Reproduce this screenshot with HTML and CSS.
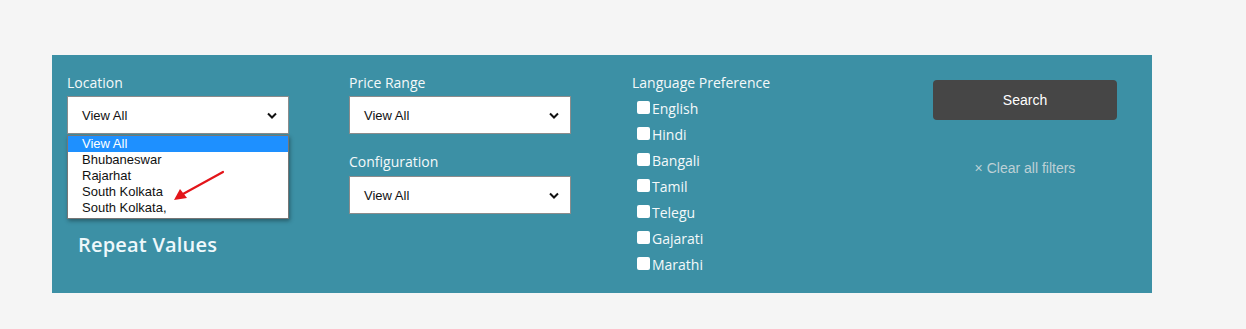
FILE: index.html
```html
<!DOCTYPE html>
<html lang="en">
<head>
    <meta charset="UTF-8">
    <title>Property Filters</title>
    <link rel="stylesheet" href="styles.css">
</head>
<body>

<div class="filters">
    <div class="col">
        <div class="label">Location</div>
        <div class="select-wrap">
            <div class="select">
                <span>View All</span>
                <svg class="chev" width="10" height="7" viewBox="0 0 10 7"><path d="M1 1.5 L5 5.5 L9 1.5" fill="none" stroke="#111" stroke-width="2"/></svg>
            </div>
            <!-- open dropdown -->
            <div class="options">
                <div class="option active">View All</div>
                <div class="option">Bhubaneswar</div>
                <div class="option">Rajarhat</div>
                <div class="option">South Kolkata</div>
                <div class="option">South Kolkata,</div>
                <svg class="arrow" width="60" height="36" viewBox="0 0 60 36">
                    <path d="M55 3 L15 25" stroke="#e3151a" stroke-width="2.2" fill="none" stroke-linecap="round"/>
                    <path d="M6 31 L12 20 L19 29 Z" fill="#e3151a"/>
                </svg>
            </div>
        </div>
        <div class="note">Repeat Values</div>
    </div>

    <div class="col">
        <div class="label">Price Range</div>
        <div class="select">
            <span>View All</span>
            <svg class="chev" width="10" height="7" viewBox="0 0 10 7"><path d="M1 1.5 L5 5.5 L9 1.5" fill="none" stroke="#111" stroke-width="2"/></svg>
        </div>
        <div class="label spaced">Configuration</div>
        <div class="select">
            <span>View All</span>
            <svg class="chev" width="10" height="7" viewBox="0 0 10 7"><path d="M1 1.5 L5 5.5 L9 1.5" fill="none" stroke="#111" stroke-width="2"/></svg>
        </div>
    </div>

    <div class="col">
        <div class="label">Language Preference</div>
        <div class="checks">
            <div class="check"><span class="box"></span>English</div>
            <div class="check"><span class="box"></span>Hindi</div>
            <div class="check"><span class="box"></span>Bangali</div>
            <div class="check"><span class="box"></span>Tamil</div>
            <div class="check"><span class="box"></span>Telegu</div>
            <div class="check"><span class="box"></span>Gajarati</div>
            <div class="check"><span class="box"></span>Marathi</div>
        </div>
    </div>

    <div class="col actions">
        <button class="search">Search</button>
        <div class="clear">&times; Clear all filters</div>
    </div>
</div>

</body>
</html>
```

FILE: styles.css
```css
body {
    margin: 0;
    padding: 55px 0 0 52px;
    background-color: #f5f5f5;
    font-family: "Open Sans", Arial, sans-serif;
}
.filters {
    width: 1100px;
    height: 238px;
    box-sizing: border-box;
    background-color: #3c90a5;
    padding: 18px 0 0 15px;
    display: grid;
    grid-template-columns: 282px 283px 281px 1fr;
}
.label {
    color: #f4f9fa;
    font-size: 14px;
    line-height: 20px;
    margin-bottom: 3px;
}
.label.spaced {
    margin-top: 18px;
    margin-bottom: 4px;
}
.select-wrap {
    position: relative;
}
.select {
    width: 222px;
    height: 38px;
    box-sizing: border-box;
    background: #fff;
    border: 1px solid #8c8c8c;
    display: flex;
    align-items: center;
    justify-content: space-between;
    padding: 0 11px 0 14px;
    font-family: "Liberation Sans", Arial, sans-serif;
    font-size: 13px;
    color: #111;
}
.options {
    position: absolute;
    top: 39px;
    left: 0;
    width: 222px;
    box-sizing: border-box;
    background: #fff;
    border: 1px solid #767676;
    padding-bottom: 2px;
    box-shadow: 1px 2px 4px rgba(0, 0, 0, 0.35);
    font-family: "Liberation Sans", Arial, sans-serif;
    font-size: 13px;
    color: #111;
    z-index: 2;
}
.option {
    height: 16px;
    line-height: 16px;
    padding-left: 14px;
}
.option.active {
    background: #1e90ff;
    color: #fff;
}
.arrow {
    position: absolute;
    left: 100px;
    top: 33px;
}
.note {
    margin-top: 97px;
    padding-left: 11px;
    color: #eef8fb;
    font-size: 20px;
    font-weight: 600;
    letter-spacing: 0.2px;
    line-height: 28px;
}
.checks {
    padding-left: 5px;
    margin-top: -1px;
}
.check {
    display: flex;
    align-items: center;
    height: 26px;
    color: #f4f9fa;
    font-size: 14px;
}
.box {
    width: 13px;
    height: 13px;
    background: #fff;
    border-radius: 2px;
    margin-right: 2px;
    margin-top: -2px;
}
.actions {
    padding-left: 20px;
    padding-top: 7px;
}
.search {
    width: 184px;
    height: 40px;
    background-color: #464646;
    color: #fff;
    border: none;
    border-radius: 4px;
    font-family: "Liberation Sans", Arial, sans-serif;
    font-size: 14px;
}
.clear {
    width: 184px;
    text-align: center;
    margin-top: 38px;
    color: #bdd0d6;
    font-family: "Liberation Sans", Arial, sans-serif;
    font-size: 14px;
    line-height: 20px;
}
```
